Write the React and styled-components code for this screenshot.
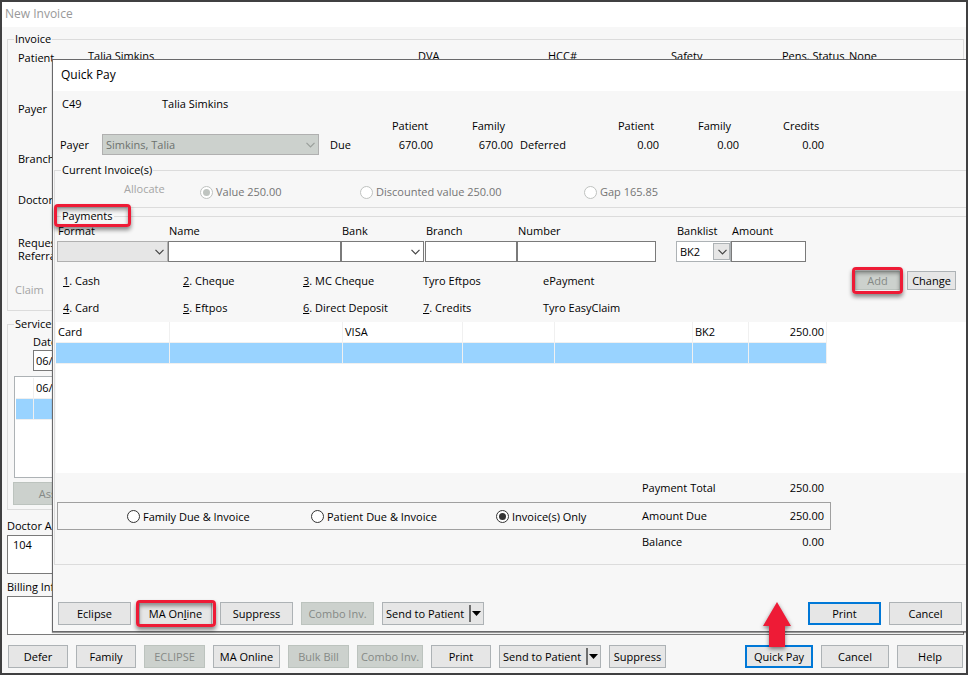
import React, { useState } from 'react'
import styled, { createGlobalStyle, css } from 'styled-components'

const colors = {
  frame: '#404041',
  surface: '#f7f7f7',
  white: '#ffffff',
  line: '#dcdcdc',
  edge: '#adb2b5',
  field: '#7a7a7a',
  button: '#e6e6e6',
  disabled: '#ccd1cd',
  muted: '#858986',
  faint: '#a5a5a5',
  primary: '#0078d7',
  row: '#99d3ff',
  red: '#ee1b36',
}

const GlobalStyle = createGlobalStyle`
  * {
    box-sizing: border-box;
  }

  body {
    margin: 0;
    background-color: ${colors.surface};
  }

  body,
  button,
  input,
  select,
  textarea {
    font-family: 'Open Sans', 'Noto Sans', sans-serif;
    font-size: 11px;
    line-height: 14px;
    color: #000;
  }
`

const Window = styled.div`
  position: relative;
  display: flex;
  flex-direction: column;
  min-height: 100vh;
  border: 2px solid ${colors.frame};
  background-color: ${colors.surface};
  overflow: hidden;
`

const TitleBar = styled.header`
  display: flex;
  align-items: center;
  height: ${({ $tall }) => ($tall ? '31px' : '25px')};
  padding: 0 ${({ $tall }) => ($tall ? '8px' : '3px')} 1px;
  background-color: ${colors.white};
  color: ${({ $inactive }) => ($inactive ? '#999' : '#000')};
`

const Title = styled.h1`
  margin: 0;
  font-size: 12px;
  font-weight: 400;
`

const Group = styled.fieldset`
  min-width: 0;
  margin: 0;
  padding: 0;
  border: 1px solid ${colors.line};
`

const Legend = styled.legend`
  margin-left: 6px;
  padding: 0 1px;
`

// ---- New Invoice window ----

const InvoiceBody = styled.main`
  display: flex;
  flex-direction: column;
  flex: 1;
  padding: 5px 2px 0 5px;
`

const InvoiceGroup = styled(Group)`
  display: flex;
  height: 279px;
`

const InvoiceLabels = styled.div`
  display: grid;
  grid-template-rows: 51px 50px 41px 43px 47px 14px;
  flex: 0 0 80px;
  padding: 5px 0 0 10px;
`

const Referral = styled.span`
  line-height: 13px;
`

const Claim = styled.span`
  margin-left: -3px;
  color: ${colors.faint};
`

const InvoiceInfo = styled.div`
  display: grid;
  grid-template-columns: 330px 130px 123px 111px 67px 1fr;
  flex: 1;
  padding-top: 3px;
`

const ServicesGroup = styled(Group)`
  height: 193px;
  margin-top: 6px;
`

const ServiceDate = styled.label`
  display: flex;
  flex-direction: column;
  gap: 1px;
  margin: 4px 0 5px 25px;
`

const ServiceList = styled.table`
  display: block;
  height: 102px;
  margin: 0 8px 4px 6px;
  padding: 1px;
  border: 1px solid ${colors.edge};
  border-spacing: 0;
  background-color: ${colors.white};

  td {
    height: 21px;
    min-width: 18px;
    padding: 0 2px 1px;
    border-right: 1px solid #efefef;
    border-bottom: 1px solid #efefef;
  }
`

const Tr = styled.tr`
  background-color: ${({ $selected }) => ($selected ? colors.row : colors.white)};
`

const Note = styled.label`
  display: flex;
  flex-direction: column;
  gap: 2px;
  margin-top: ${({ $first }) => ($first ? '9px' : '6px')};
`

const NoteBox = styled.textarea`
  height: 39px;
  padding: 2px 5px;
  border: 1px solid ${colors.field};
  background-color: ${colors.white};
  resize: none;
`

// ---- controls ----

const Button = styled.button`
  width: ${({ $width }) => $width}px;
  height: 23px;
  padding: 0;
  border: 1px solid ${colors.edge};
  background-color: ${colors.button};
  white-space: nowrap;

  ${({ $short }) =>
    $short &&
    css`
      height: 19px;
    `}

  ${({ $primary }) =>
    $primary &&
    css`
      border: 2px solid ${colors.primary};
    `}

  &:disabled {
    border-color: #bcc3be;
    background-color: ${colors.disabled};
    color: ${colors.muted};
  }
`

const AssistButton = styled(Button)`
  display: block;
  margin-left: 5px;
`

const SplitButton = styled(Button)`
  display: flex;
  align-items: center;
  justify-content: space-between;
  padding: 0 2px 0 3px;
`

const SplitArrow = styled.span`
  display: flex;
  align-items: center;
  height: 17px;
  padding-left: 1px;
  border-left: 2px solid #6e6e6e;
`

const marked = css`
  position: relative;

  &::after {
    content: '';
    position: absolute;
    inset: ${({ $inset }) => $inset};
    border: 3px solid ${colors.red};
    border-radius: 4px;
    box-shadow: 0 3px 4px rgba(0, 0, 0, 0.45), inset 0 3px 4px rgba(0, 0, 0, 0.4);
    pointer-events: none;
  }
`

const Marked = styled.span`
  display: flex;
  ${marked}
`

const MarkedText = styled.span`
  ${marked}
`

const TextBox = styled.input`
  width: 100%;
  height: 21px;
  padding: 0 2px;
  border: 1px solid ${colors.field};
  border-radius: 0;
  background-color: ${colors.white};
`

const SelectWrap = styled.span`
  display: grid;
  align-items: center;

  select,
  svg,
  span {
    grid-area: 1 / 1;
  }

  svg {
    justify-self: end;
    margin-right: 4px;
    pointer-events: none;
  }
`

const SelectBox = styled.select`
  appearance: none;
  width: 100%;
  height: 21px;
  padding: 0 3px;
  border: 1px solid ${({ $soft }) => ($soft ? colors.edge : colors.field)};
  border-radius: 0;
  background-color: ${colors.white};

  &:disabled {
    border-color: #b0b0b0;
    background-color: ${({ $grey }) => ($grey ? colors.disabled : colors.button)};
    color: #6c726e;
    opacity: 1;
  }
`

const DropFace = styled.span`
  justify-self: end;
  width: 17px;
  height: 17px;
  margin-right: 1px;
  border: 1px solid ${colors.edge};
  background-color: ${colors.button};
  pointer-events: none;
`

const Chevron = ({ color = '#444' }) => (
  <svg width="9" height="6" viewBox="0 0 9 6" fill="none" stroke={color} strokeWidth="1.2">
    <path d="M0.5 0.8 L4.5 4.8 L8.5 0.8" />
  </svg>
)

const DownTriangle = () => (
  <svg width="9" height="5" viewBox="0 0 9 5">
    <path d="M0 0 H9 L4.5 5 Z" fill="#000" />
  </svg>
)

const RadioLabel = styled.label`
  display: flex;
  align-items: center;
  gap: 3px;
  color: ${({ $disabled }) => ($disabled ? '#757575' : '#000')};
  white-space: nowrap;
`

const RadioInput = styled.input`
  appearance: none;
  display: grid;
  place-items: center;
  flex: none;
  width: 13px;
  height: 13px;
  margin: 0;
  border: 1px solid #333;
  border-radius: 50%;
  background-color: ${colors.white};

  &:checked::before {
    content: '';
    width: 7px;
    height: 7px;
    border-radius: 50%;
    background-color: #333;
  }

  &:disabled {
    border-color: #bfc2c0;
  }

  &:disabled::before {
    background-color: #bfc4c0;
  }
`

function Radio({ children, disabled, ...rest }) {
  return (
    <RadioLabel $disabled={disabled}>
      <RadioInput type="radio" disabled={disabled} {...rest} />
      {children}
    </RadioLabel>
  )
}

function SendToPatient() {
  return (
    <SplitButton type="button" $width={102}>
      Send to Patient
      <SplitArrow>
        <DownTriangle />
      </SplitArrow>
    </SplitButton>
  )
}

// ---- Quick Pay dialog ----

const Dialog = styled.section`
  position: absolute;
  z-index: 1;
  top: 57px;
  left: 50px;
  right: 0;
  border: 1px solid #69696b;
  border-right: 0;
  background-color: ${colors.surface};
  box-shadow: 0 1px 1px rgba(0, 0, 0, 0.4);
`

const DialogBody = styled.div`
  padding: 6px 0 0 1px;
`

const PatientLine = styled.div`
  display: grid;
  grid-template-columns: 100px 1fr;
  padding-left: 8px;
`

const Summary = styled.div`
  display: grid;
  grid-template-columns: 42px 217px 11px 62px 80px 48px 98px 80px 85px 1fr;
  align-items: end;
  margin: 8px 0 8px;
  padding-left: 6px;
`

const SummaryText = styled.span`
  padding-bottom: 3px;
`

const Stat = styled.div`
  display: grid;
  gap: 5px;
  width: 41px;
  padding-bottom: 3px;

  span:last-child {
    text-align: right;
  }
`

const DialogGroup = styled(Group)`
  margin-bottom: 1px;
  border-right: 0;
`

const Allocation = styled.div`
  display: grid;
  grid-template-columns: 76px 160px 224px 1fr;
  align-items: center;
  height: 30px;
  padding-left: 69px;
`

const AllocateText = styled.span`
  padding-bottom: 6px;
  color: ${colors.faint};
`

const Fields = styled.div`
  display: grid;
  grid-template-columns: 111px 173px 84px 92px 159px 55px 75px;
  padding: 1px 0 0 2px;
`

const Field = styled.label`
  display: flex;
  flex-direction: column;
  gap: 3px;
  padding-right: ${({ $after }) => $after || 0}px;
`

const FieldName = styled.span`
  padding-left: 1px;
`

const Formats = styled.div`
  display: flex;
  justify-content: space-between;
  margin: 9px 10px 7px 8px;
`

const FormatLinks = styled.div`
  display: grid;
  grid-template-columns: repeat(5, 120px);
  row-gap: 13px;
  padding-top: 3px;
`

const FormatLink = styled.a`
  color: #000;
  text-decoration: none;
`

const FormatActions = styled.div`
  display: flex;
  align-items: flex-start;
  gap: 7px;
`

const PaymentArea = styled.div`
  height: 151px;
  margin-left: 1px;
  background-color: ${colors.white};
`

const PaymentTable = styled.table`
  table-layout: fixed;
  width: 771px;
  border-collapse: separate;
  border-spacing: 0;

  td {
    height: 21px;
    padding: 0 2px 1px;
    border-right: 1px solid #f0f0f0;
    border-bottom: 1px solid #f0f0f0;
  }

  td:last-child {
    text-align: right;
  }
`

const Totals = styled.div`
  width: 774px;
  margin-left: 2px;
  padding-bottom: 10px;
`

const TotalRow = styled.div`
  display: grid;
  grid-template-columns: 584px 90px 1fr;
  align-items: center;
  height: ${({ $height }) => $height}px;
  padding: 0 6px 0 0;
  border: 1px solid ${({ $boxed }) => ($boxed ? '#a0a0a0' : 'transparent')};

  output {
    text-align: right;
  }
`

const Scope = styled.div`
  display: grid;
  grid-template-columns: 184px 185px 1fr;
  padding: 1px 0 0 69px;
`

const ButtonBar = styled.footer`
  display: flex;
  gap: 8px;
  padding: ${({ $dialog }) => ($dialog ? '36px 4px 6px 4px' : '10px 3px 5px 6px')};
`

const Spacer = styled.span`
  flex: 1;
`

const Pointer = styled.span`
  position: relative;
  display: flex;

  svg {
    position: absolute;
    z-index: 2;
    left: 16px;
    bottom: 20px;
    filter: drop-shadow(0 2px 2px rgba(0, 0, 0, 0.5));
    pointer-events: none;
  }
`

const formats = [
  ['1', '. Cash'],
  ['2', '. Cheque'],
  ['3', '. MC Cheque'],
  ['', 'Tyro Eftpos'],
  ['', 'ePayment'],
  ['4', '. Card'],
  ['5', '. Eftpos'],
  ['6', '. Direct Deposit'],
  ['7', '. Credits'],
  ['', 'Tyro EasyClaim'],
]

const columns = [114, 173, 120, 92, 138, 56, 78]
const payments = [
  ['Card', '', 'VISA', '', '', 'BK2', '250.00'],
  ['', '', '', '', '', '', ''],
]

const scopes = ['Family Due & Invoice', 'Patient Due & Invoice', 'Invoice(s) Only']

function QuickPay() {
  const [scope, setScope] = useState(scopes[2])

  return (
    <Dialog role="dialog" aria-label="Quick Pay">
      <TitleBar $tall>
        <Title as="h2">Quick Pay</Title>
      </TitleBar>
      <DialogBody>
        <PatientLine>
          <span>C49</span>
          <span>Talia Simkins</span>
        </PatientLine>
        <Summary>
          <SummaryText as="label" htmlFor="payer">
            Payer
          </SummaryText>
          <SelectWrap>
            <SelectBox id="payer" disabled $grey>
              <option>Simkins, Talia</option>
            </SelectBox>
            <Chevron color="#9a9f9b" />
          </SelectWrap>
          <span />
          <SummaryText>Due</SummaryText>
          <Stat>
            <span>Patient</span>
            <span>670.00</span>
          </Stat>
          <Stat>
            <span>Family</span>
            <span>670.00</span>
          </Stat>
          <SummaryText>Deferred</SummaryText>
          <Stat>
            <span>Patient</span>
            <span>0.00</span>
          </Stat>
          <Stat>
            <span>Family</span>
            <span>0.00</span>
          </Stat>
          <Stat>
            <span>Credits</span>
            <span>0.00</span>
          </Stat>
        </Summary>

        <DialogGroup>
          <Legend>Current Invoice(s)</Legend>
          <Allocation>
            <AllocateText>Allocate</AllocateText>
            <Radio name="allocate" disabled defaultChecked>
              Value 250.00
            </Radio>
            <Radio name="allocate" disabled>
              Discounted value 250.00
            </Radio>
            <Radio name="allocate" disabled>
              Gap 165.85
            </Radio>
          </Allocation>
        </DialogGroup>

        <DialogGroup>
          <Legend>
            <MarkedText $inset="-4px -18px -4px -8px">Payments</MarkedText>
          </Legend>
          <Fields>
            <Field>
              <FieldName>Format</FieldName>
              <SelectWrap>
                <SelectBox disabled />
                <Chevron />
              </SelectWrap>
            </Field>
            <Field>
              <FieldName>Name</FieldName>
              <TextBox />
            </Field>
            <Field $after={1}>
              <FieldName>Bank</FieldName>
              <SelectWrap>
                <SelectBox />
                <Chevron />
              </SelectWrap>
            </Field>
            <Field>
              <FieldName>Branch</FieldName>
              <TextBox />
            </Field>
            <Field $after={20}>
              <FieldName>Number</FieldName>
              <TextBox />
            </Field>
            <Field>
              <FieldName>Banklist</FieldName>
              <SelectWrap>
                <SelectBox $soft>
                  <option>BK2</option>
                </SelectBox>
                <DropFace />
                <Chevron />
              </SelectWrap>
            </Field>
            <Field>
              <FieldName>Amount</FieldName>
              <TextBox />
            </Field>
          </Fields>

          <Formats>
            <FormatLinks>
              {formats.map(([key, label]) => (
                <FormatLink href="#" key={key + label}>
                  {key && <u>{key}</u>}
                  {label}
                </FormatLink>
              ))}
            </FormatLinks>
            <FormatActions>
              <Marked $inset="-4px -3px">
                <Button type="button" $width={45} $short disabled>
                  Add
                </Button>
              </Marked>
              <Button type="button" $width={49} $short>
                Change
              </Button>
            </FormatActions>
          </Formats>

          <PaymentArea>
            <PaymentTable>
              <colgroup>
                {columns.map((width, i) => (
                  <col key={i} style={{ width }} />
                ))}
              </colgroup>
              <tbody>
                {payments.map((cells, i) => (
                  <Tr key={i} $selected={i === 1}>
                    {cells.map((cell, j) => (
                      <td key={j}>{cell}</td>
                    ))}
                  </Tr>
                ))}
              </tbody>
            </PaymentTable>
          </PaymentArea>

          <Totals>
            <TotalRow $height={29}>
              <span />
              <span>Payment Total</span>
              <output>250.00</output>
            </TotalRow>
            <TotalRow $height={28} $boxed>
              <Scope>
                {scopes.map((name) => (
                  <Radio
                    key={name}
                    name="scope"
                    checked={scope === name}
                    onChange={() => setScope(name)}
                  >
                    {name}
                  </Radio>
                ))}
              </Scope>
              <span>Amount Due</span>
              <output>250.00</output>
            </TotalRow>
            <TotalRow $height={24}>
              <span />
              <span>Balance</span>
              <output>0.00</output>
            </TotalRow>
          </Totals>
        </DialogGroup>

        <ButtonBar $dialog>
          <Button type="button" $width={73}>
            Eclipse
          </Button>
          <Marked $inset="-2px -4px -2px -3px">
            <Button type="button" $width={73}>
              MA On<u>l</u>ine
            </Button>
          </Marked>
          <Button type="button" $width={73}>
            Suppress
          </Button>
          <Button type="button" $width={73} disabled>
            Combo Inv.
          </Button>
          <SendToPatient />
          <Spacer />
          <Button type="button" $width={73} $primary>
            Print
          </Button>
          <Button type="button" $width={73}>
            Cancel
          </Button>
        </ButtonBar>
      </DialogBody>
    </Dialog>
  )
}

function App() {
  return (
    <Window>
      <GlobalStyle />
      <TitleBar $inactive>
        <Title>New Invoice</Title>
      </TitleBar>
      <InvoiceBody>
        <InvoiceGroup>
          <Legend>Invoice</Legend>
          <InvoiceLabels>
            <span>Patient</span>
            <span>Payer</span>
            <span>Branch</span>
            <span>Doctor</span>
            <Referral>
              Request
              <br />
              Referral
            </Referral>
            <Claim>Claim</Claim>
          </InvoiceLabels>
          <InvoiceInfo>
            <span>Talia Simkins</span>
            <span>DVA</span>
            <span>HCC#</span>
            <span>Safety</span>
            <span>Pens. Status</span>
            <span>None</span>
          </InvoiceInfo>
        </InvoiceGroup>

        <ServicesGroup>
          <Legend>Services</Legend>
          <ServiceDate>
            Date
            <TextBox defaultValue="06/" />
          </ServiceDate>
          <ServiceList>
            <tbody>
              <tr>
                <td />
                <td>06/</td>
              </tr>
              <Tr $selected>
                <td />
                <td />
              </Tr>
            </tbody>
          </ServiceList>
          <AssistButton type="button" $width={81} disabled>
            Assist
          </AssistButton>
        </ServicesGroup>

        <Note $first>
          Doctor A
          <NoteBox defaultValue="104" />
        </Note>
        <Note>
          Billing Info
          <NoteBox />
        </Note>
      </InvoiceBody>

      <ButtonBar>
        <Button type="button" $width={60}>
          Defer
        </Button>
        <Button type="button" $width={60}>
          Family
        </Button>
        <Button type="button" $width={61} disabled>
          ECLIPSE
        </Button>
        <Button type="button" $width={67}>
          MA Online
        </Button>
        <Button type="button" $width={61} disabled>
          Bulk Bill
        </Button>
        <Button type="button" $width={66} disabled>
          Combo Inv.
        </Button>
        <Button type="button" $width={60}>
          Print
        </Button>
        <SendToPatient />
        <Button type="button" $width={57}>
          Suppress
        </Button>
        <Spacer />
        <Pointer>
          <Button type="button" $width={68} $primary>
            Quick Pay
          </Button>
          <svg width="32" height="48" viewBox="0 0 32 48">
            <path d="M16 2 L30 26 H24 V47 H8 V26 H2 Z" fill={colors.red} />
          </svg>
        </Pointer>
        <Button type="button" $width={68}>
          Cancel
        </Button>
        <Button type="button" $width={66}>
          Help
        </Button>
      </ButtonBar>

      <QuickPay />
    </Window>
  )
}

export default App
